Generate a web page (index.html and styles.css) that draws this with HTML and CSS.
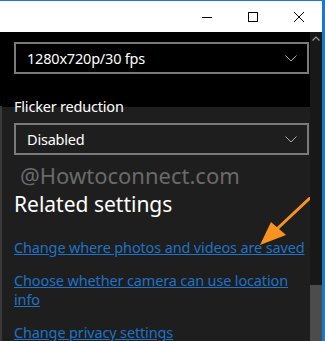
FILE: index.html
```html
<!DOCTYPE html>
<html lang="en">
<head>
  <meta charset="UTF-8">
  <title>Camera settings</title>
  <link rel="stylesheet" href="styles.css">
</head>
<body>
  <div class="window">
    <!-- Titelleiste -->
    <div class="titlebar">
      <span class="ctl">
        <svg width="12" height="12" viewBox="0 0 12 12"><path d="M1 6.5h10" stroke="#000" stroke-width="1"/></svg>
      </span>
      <span class="ctl">
        <svg width="12" height="12" viewBox="0 0 12 12"><rect x="1.5" y="1.5" width="9" height="9" fill="none" stroke="#000" stroke-width="1"/></svg>
      </span>
      <span class="ctl">
        <svg width="12" height="12" viewBox="0 0 12 12"><path d="M1 1l10 10M11 1L1 11" stroke="#000" stroke-width="1"/></svg>
      </span>
    </div>

    <div class="main">
      <div class="content">
        <div class="select">
          <span>1280x720p/30 fps</span>
          <svg class="chev" width="12" height="7" viewBox="0 0 12 7"><path d="M0.5 0.5l5.5 5.5l5.5-5.5" fill="none" stroke="#aaa" stroke-width="1"/></svg>
        </div>

        <div class="label">Flicker reduction</div>
        <div class="select">
          <span>Disabled</span>
          <svg class="chev" width="12" height="7" viewBox="0 0 12 7"><path d="M0.5 0.5l5.5 5.5l5.5-5.5" fill="none" stroke="#aaa" stroke-width="1"/></svg>
        </div>

        <div class="watermark">@Howtoconnect.com</div>

        <h2>Related settings</h2>
        <a class="link" href="#">Change where photos and videos are saved</a>
        <a class="link" href="#">Choose whether camera can use location info</a>
        <a class="link" href="#">Change privacy settings</a>

        <!-- Pfeil -->
        <svg class="arrow" width="60" height="52" viewBox="0 0 60 52">
          <path d="M56 1L24 31" stroke="#f7931e" stroke-width="3" stroke-linecap="round"/>
          <path d="M6 48L17 25L32 38Z" fill="#f7931e"/>
        </svg>
      </div>

      <div class="scrollbar">
        <svg class="up" width="8" height="5" viewBox="0 0 8 5"><path d="M0.5 4.5L4 1L7.5 4.5" fill="none" stroke="#9a9a9a" stroke-width="1.2"/></svg>
        <div class="thumb"></div>
      </div>
    </div>
  </div>
</body>
</html>
```

FILE: styles.css
```css
body {
  margin: 0;
  font-family: "Noto Sans", "Open Sans", sans-serif;
  background: #1e1e1e;
}
.window {
  width: 322px;
  height: 340px;
  border-top: 1px solid #1979ca;
  border-right: 3px solid #1979ca;
  display: flex;
  flex-direction: column;
  overflow: hidden;
}
.titlebar {
  height: 31px;
  background: #fff;
  display: flex;
  justify-content: flex-end;
  align-items: center;
  flex-shrink: 0;
}
.ctl {
  width: 46px;
  height: 31px;
  display: flex;
  align-items: center;
  justify-content: center;
}
.ctl svg {
  display: block;
}
.main {
  flex: 1;
  display: flex;
}
.content {
  flex: 1;
  position: relative;
  padding: 10px 1px 0 12px;
  background: linear-gradient(#000 0 75px, #1e1e1e 75px);
  border-left: 2px solid #3a3a3a;
  border-image: linear-gradient(transparent 0 75px, #3a3a3a 75px) 1;
}
.select {
  height: 28px;
  border: 2px solid #7a7a7a;
  display: flex;
  align-items: center;
  justify-content: space-between;
  padding: 0 10px 0 11px;
  color: #fff;
  font-size: 14.5px;
  letter-spacing: -0.2px;
}
.chev {
  display: block;
}
.label {
  color: #fff;
  font-size: 14.5px;
  letter-spacing: -0.2px;
  line-height: 20px;
  margin: 22px 0 7px;
}
.watermark {
  color: #6a6a6a;
  font-size: 22px;
  line-height: 28px;
  margin: 6px 0 0 6px;
}
h2 {
  color: #fff;
  font-size: 21px;
  font-weight: 400;
  line-height: 28px;
  margin: 1px 0 20px;
}
.link {
  display: block;
  color: #1f72c6;
  font-size: 14.5px;
  letter-spacing: -0.15px;
  line-height: 19px;
  margin-bottom: 14px;
  width: 292px;
}
.arrow {
  position: absolute;
  left: 252px;
  top: 165px;
}
.scrollbar {
  width: 12px;
  background: #181818;
  position: relative;
}
.up {
  position: absolute;
  left: 2px;
  top: 4px;
}
.thumb {
  position: absolute;
  left: 0;
  right: 0;
  top: 253px;
  bottom: 0;
  background: #4c4c4c;
}
```
